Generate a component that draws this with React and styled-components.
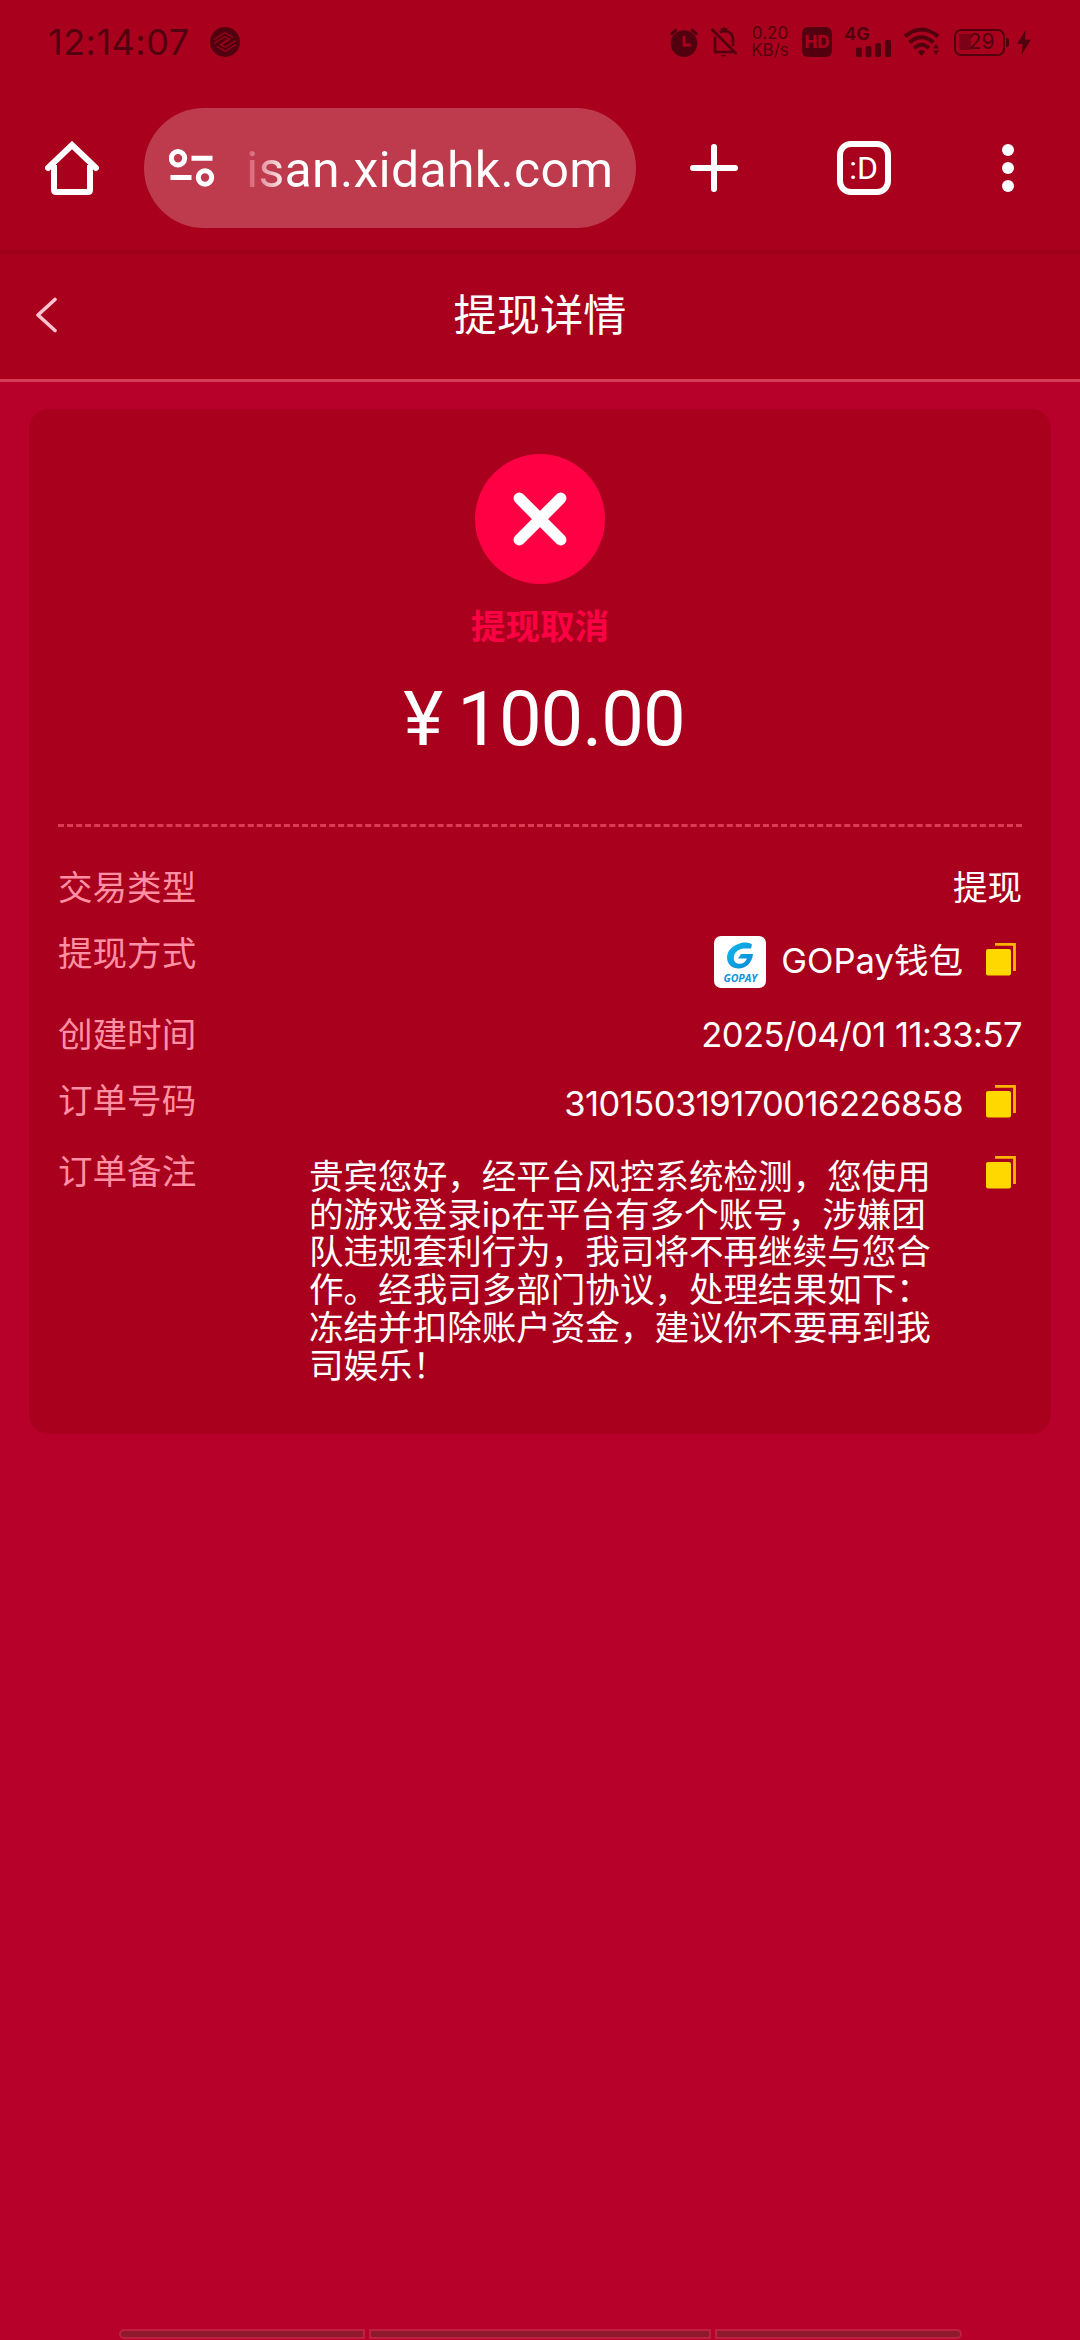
import styled, { createGlobalStyle } from "styled-components";

const INK = "#52000f";

const noteLines = [
  "贵宾您好，经平台风控系统检测，您使用",
  "的游戏登录ip在平台有多个账号，涉嫌团",
  "队违规套利行为，我司将不再继续与您合",
  "作。经我司多部门协议，处理结果如下：",
  "冻结并扣除账户资金，建议你不要再到我",
  "司娱乐！",
];

const CarrierIcon = () => (
  <svg width="30" height="30" viewBox="0 0 30 30" fill="none" stroke="#a0001b" strokeWidth="1.300">
    <circle cx="15" cy="15" r="15" fill={INK} stroke="none" />
    <path d="M4 12.500 13.500 6.500q1.500-1 3 0L23 10.500" />
    <path d="M4 16.500 13.500 10.500q1.500-1 3 0l2.500 1.500-9 6" />
    <path d="M26 17.500 16.500 23.500q-1.500 1-3 0L7 19.500" />
    <path d="M26 13.500 16.500 19.500q-1.500 1-3 0L11 18l9-6" />
  </svg>
);

const AlarmIcon = () => (
  <svg width="28" height="30" viewBox="0 0 28 30">
    <circle cx="14" cy="16.500" r="13.300" fill={INK} />
    <path d="M.800 7.500 6.500 2.500M27.200 7.500 21.500 2.500" stroke={INK} strokeWidth="3" />
    <path d="M14 9v9h6.500" fill="none" stroke="#a9001d" strokeWidth="2.800" />
  </svg>
);

const BellOffIcon = () => (
  <svg width="28" height="30" viewBox="0 0 28 30" fill="none" stroke={INK} strokeWidth="2.600">
    <path d="M1.500 2 26.500 27" />
    <path d="M5 9.500V25h18.500M10 5.500Q12 4 14.500 4q8.500.500 8.500 9v6" />
    <path d="M4 25h4M11 2.800q3-2 6 0" />
    <path d="M10.500 28h6l-3 2z" fill={INK} stroke="none" />
  </svg>
);

const SignalIcon = () => (
  <svg width="36" height="17" viewBox="0 0 36 17" fill={INK}>
    <rect x="0" y="7.500" width="5.800" height="9.500" rx="1.500" />
    <rect x="9.600" y="6" width="5.800" height="11" rx="1.500" />
    <rect x="19.200" y="3" width="5.800" height="14" rx="1.500" />
    <rect x="29" y="0" width="6" height="17" rx="1.500" />
  </svg>
);

const WifiIcon = () => (
  <svg width="36" height="30" viewBox="0 0 36 30" fill="none" stroke={INK}>
    <path d="M1 9.500q16.500-14 33 0" strokeWidth="4" />
    <path d="M5.500 15.500q12-10.500 24 0" strokeWidth="4" />
    <path d="M10 21q7.500-6.500 15 0" strokeWidth="3.800" />
    <path d="M13.500 24.500q4-3 8 0l-4 4.500z" fill={INK} stroke="none" />
    <path d="M29 21.500h6l-3-4.500zM29 23.500h6l-3 4.500z" fill={INK} stroke="none" />
  </svg>
);

const BoltIcon = () => (
  <svg width="14" height="25" viewBox="0 0 14 25">
    <path d="M8.500 0 0 14h5.500L4.500 25 14 9.500H8z" fill={INK} />
  </svg>
);

const HomeIcon = () => (
  <svg width="54" height="54" viewBox="0 0 54 54" fill="none" stroke="#fff">
    <path d="M9 24v25q0 2 2 2h32q2 0 2-2V24" strokeWidth="6" />
    <path d="M3 27 27 4l24 23" strokeWidth="6" strokeLinecap="round" />
  </svg>
);

const TuneIcon = () => (
  <svg width="46" height="38" viewBox="0 0 46 38" fill="none" stroke="#fff" strokeWidth="5">
    <circle cx="9" cy="9.300" r="6.700" />
    <path d="M22.500 9.300h21M1.500 28.500h21" />
    <circle cx="36" cy="28.500" r="6.700" />
  </svg>
);

const PlusIcon = () => (
  <svg width="48" height="48" viewBox="0 0 48 48" stroke="#fff" strokeWidth="6" strokeLinecap="round">
    <path d="M24 3v42M3 24h42" />
  </svg>
);

const MoreIcon = () => (
  <svg width="12" height="48" viewBox="0 0 12 48" fill="#fff">
    <circle cx="6" cy="6" r="6" />
    <circle cx="6" cy="24" r="6" />
    <circle cx="6" cy="42" r="6" />
  </svg>
);

const BackIcon = () => (
  <svg width="22" height="36" viewBox="0 0 22 36" fill="none" stroke="#ffc4d0" strokeWidth="3.600" strokeLinecap="round" strokeLinejoin="round">
    <path d="M19 2.500 2 18l17 15.500" />
  </svg>
);

const CancelIcon = () => (
  <svg width="130" height="130" viewBox="0 0 130 130">
    <circle cx="65" cy="65" r="65" fill="#ff0045" />
    <path d="M44.300 44.300 85.700 85.700M85.700 44.300 44.300 85.700" stroke="#fff" strokeWidth="11.500" strokeLinecap="round" />
  </svg>
);

const CopyIcon = () => (
  <svg width="30" height="33" viewBox="0 0 30 33">
    <rect x="0" y="6" width="25" height="26.500" rx="2" fill="#ffd800" />
    <path d="M9 1.300h19.500V28" fill="none" stroke="#ffb400" strokeWidth="2.800" />
  </svg>
);

const GoPayMark = () => (
  <svg width="28" height="27" viewBox="0 0 28 27" fill="none">
    <defs>
      <linearGradient id="gopay" x1="0" y1="0" x2="1" y2="1">
        <stop offset="0" stopColor="#12b9ea" />
        <stop offset="1" stopColor="#0788d8" />
      </linearGradient>
    </defs>
    <path
      d="M26 2.500C23 .500 19 0 15 1 7 3 1 8.500 1 15.500c0 6.500 5 11 11.500 11 7.500 0 13.500-5.500 14.500-14.500H15l-3 4.500h9c-1.500 3.500-4 5.300-7.500 5.300-4 0-6-2.800-5.700-6.300.400-5.500 5.200-9 10.200-9H25z"
      fill="url(#gopay)"
    />
  </svg>
);

const copyable = (content) => (
  <>
    {content}
    <CopyIcon />
  </>
);

export default function App() {
  return (
    <Screen>
      <GlobalStyle />
      <StatusBar>
        <Clock>12:14:07</Clock>
        <CarrierIcon />
        <StatusIcons>
          <AlarmIcon />
          <BellOffIcon />
          <Speed>
            <span>0.20</span>
            <span>KB/s</span>
          </Speed>
          <HdBadge>HD</HdBadge>
          <Network>
            <span>4G</span>
            <SignalIcon />
          </Network>
          <WifiIcon />
          <Battery>29</Battery>
          <BoltIcon />
        </StatusIcons>
      </StatusBar>

      <BrowserBar>
        <HomeIcon />
        <AddressPill>
          <TuneIcon />
          <Address>isan.xidahk.com</Address>
        </AddressPill>
        <BrowserActions>
          <PlusIcon />
          <TabCount>:D</TabCount>
          <MoreIcon />
        </BrowserActions>
      </BrowserBar>

      <PageHeader>
        <BackIcon />
        <PageTitle>提现详情</PageTitle>
      </PageHeader>

      <Card>
        <Summary>
          <CancelIcon />
          <Status>提现取消</Status>
          <Amount>
            <Currency>¥</Currency>100.00
          </Amount>
        </Summary>
        <Details>
          <Row $height={66}>
            <Label>交易类型</Label>
            <Value>提现</Value>
          </Row>
          <Row $height={81}>
            <Label>提现方式</Label>
            <Value $height={52} $drop={1}>
              {copyable(
                <>
                  <Logo>
                    <GoPayMark />
                    <LogoName>GOPAY</LogoName>
                  </Logo>
                  <Method>GOPay钱包</Method>
                </>
              )}
            </Value>
          </Row>
          <Row $height={66}>
            <Label>创建时间</Label>
            <Value $tracking={-0.52}>2025/04/01 11:33:57</Value>
          </Row>
          <Row $height={71}>
            <Label>订单号码</Label>
            <Value $drop={3} $tracking={-0.55}>
              {copyable(<Copied>310150319170016226858</Copied>)}
            </Value>
          </Row>
          <Row>
            <Label>订单备注</Label>
            <Note>
              {noteLines.map((line) => (
                <div key={line}>{line}</div>
              ))}
            </Note>
            <Value $drop={3}>
              <CopyIcon />
            </Value>
          </Row>
        </Details>
      </Card>

      <GestureBar>
        <Gesture $round="6px 0 0 6px" />
        <Gesture $wide />
        <Gesture $round="0 6px 6px 0" />
      </GestureBar>
    </Screen>
  );
}

const GlobalStyle = createGlobalStyle`
  * {
    box-sizing: border-box;
  }

  body {
    margin: 0;
    background: #b7002a;
  }

  svg {
    display: block;
    flex-shrink: 0;
  }
`;

const Screen = styled.div`
  display: flex;
  flex-direction: column;
  width: 1080px;
  height: 2340px;
  overflow: hidden;
  background: #b7002a;
  color: #fff;
  font-family: "Inter", "Noto Sans CJK SC", sans-serif;
`;

const StatusBar = styled.div`
  display: flex;
  align-items: center;
  height: 84px;
  padding: 0 49px 0 48px;
  background: #a9001d;
  color: ${INK};
`;

const Clock = styled.div`
  width: 162px;
  font-size: 36px;
  letter-spacing: 0.5px;
  white-space: nowrap;
`;

const StatusIcons = styled.div`
  display: flex;
  align-items: center;
  margin-left: auto;
  gap: 12px;
`;

const Speed = styled.div`
  display: flex;
  flex-direction: column;
  align-items: center;
  width: 40px;
  font-size: 17px;
  line-height: 17px;
`;

const HdBadge = styled.div`
  width: 30px;
  height: 30px;
  border-radius: 6px;
  background: ${INK};
  color: #a9001d;
  font-size: 17px;
  font-weight: 800;
  line-height: 30px;
  text-align: center;
`;

const Network = styled.div`
  display: flex;
  flex-direction: column;
  align-items: flex-end;
  width: 48px;
  height: 30px;
  font-size: 18px;
  font-weight: 700;
  line-height: 14px;

  span {
    align-self: flex-start;
    height: 13px;
  }
`;

const Battery = styled.div`
  position: relative;
  width: 51px;
  height: 27px;
  margin-left: 2px;
  border: 2.500px solid ${INK};
  border-radius: 7px;
  background: linear-gradient(90deg, #7c0016 12px, transparent 12px) 3px 3px / 40px 16px no-repeat;
  font-size: 21px;
  line-height: 22px;
  text-align: center;
  padding-left: 4px;

  &::after {
    content: "";
    position: absolute;
    top: 7px;
    right: -6px;
    width: 3px;
    height: 9px;
    border-radius: 0 2px 2px 0;
    background: ${INK};
  }
`;

const BrowserBar = styled.div`
  display: flex;
  align-items: center;
  height: 170px;
  padding: 0 66px 2px 45px;
  background: linear-gradient(#a9001d 163px, #9b0019);
`;

const AddressPill = styled.div`
  display: flex;
  align-items: center;
  width: 492px;
  height: 120px;
  margin-left: 45px;
  padding-left: 25px;
  border-radius: 60px;
  background: #be3b4e;
`;

const Address = styled.div`
  margin-left: 31px;
  padding-top: 4px;
  font-family: Roboto, sans-serif;
  font-size: 50px;
  letter-spacing: 0.3px;
  white-space: nowrap;
  background: linear-gradient(90deg, #d2586c, #fff 42px);
  background-clip: text;
  color: transparent;
`;

const BrowserActions = styled.div`
  display: flex;
  flex: 1;
  align-items: center;
  justify-content: space-between;
  margin-left: 54px;
`;

const TabCount = styled.div`
  display: flex;
  align-items: center;
  justify-content: center;
  width: 54px;
  height: 54px;
  margin-left: -13px;
  padding-bottom: 1px;
  border: 6px solid #fff;
  border-radius: 14px;
  font-family: Roboto, sans-serif;
  font-size: 32px;
  line-height: 40px;
`;

const PageHeader = styled.div`
  display: flex;
  align-items: center;
  height: 128px;
  padding: 0 58px 3px 36px;
  border-bottom: 3px solid #d43c57;
  background: #a9001d;
`;

const PageTitle = styled.h1`
  flex: 1;
  margin: 0;
  font-size: 43.200px;
  font-weight: 400;
  line-height: 60px;
  text-align: center;
`;

const Card = styled.div`
  height: 1025px;
  margin: 27px 29px 0 29px;
  padding: 45px 29px 0;
  border-radius: 20px;
  background: #a9001d;
`;

const Summary = styled.div`
  display: flex;
  flex-direction: column;
  align-items: center;
  height: 373px;
  border-bottom: 3px dashed #df3a55;
`;

const Status = styled.div`
  margin-top: 23px;
  color: #ff0045;
  font-size: 34.500px;
  font-weight: 700;
  line-height: 40px;
`;

const Amount = styled.div`
  display: flex;
  margin-top: 32px;
  padding-left: 8px;
  font-family: Roboto, sans-serif;
  font-size: 76px;
  line-height: 80px;
  letter-spacing: -1px;
`;

const Currency = styled.span`
  width: 54px;
`;

const Details = styled.div`
  display: flex;
  flex-direction: column;
  padding-top: 42px;
`;

const Row = styled.div`
  display: flex;
  height: ${({ $height }) => ($height ? `${$height}px` : "auto")};
  font-size: 34.560px;
  line-height: 38px;
`;

const Label = styled.div`
  width: 251px;
  color: #ff8fa3;
`;

const Value = styled.div`
  display: flex;
  align-items: center;
  height: ${({ $height }) => $height || 38}px;
  margin-top: ${({ $drop }) => $drop || 0}px;
  margin-left: auto;
  letter-spacing: ${({ $tracking }) => $tracking || 0}px;
  white-space: nowrap;

  > svg {
    margin-right: 6px;
    margin-bottom: 6px;
  }
`;

const Logo = styled.div`
  display: flex;
  flex-direction: column;
  align-items: center;
  width: 52px;
  height: 52px;
  margin-right: 15px;
  padding-top: 6px;
  border-radius: 7px;
  background: #fff;
`;

const LogoName = styled.span`
  margin-top: 3px;
  color: #0a93dc;
  font-family: "Open Sans", sans-serif;
  font-size: 10.500px;
  font-style: italic;
  font-weight: 700;
  line-height: 12px;
`;

const Copied = styled.span`
  margin-right: 23px;
`;

const Method = styled(Copied)`
  padding-bottom: 2px;
`;

const Note = styled.div`
  width: 640px;
  padding-top: 5px;
  line-height: 37.700px;
  white-space: nowrap;
`;

const GestureBar = styled.div`
  display: flex;
  gap: 4px;
  width: 843px;
  margin: auto auto 1px;
`;

const Gesture = styled.div`
  flex: ${({ $wide }) => ($wide ? "0 0 342px" : "1")};
  height: 10px;
  border: 2px solid #be2140;
  border-radius: ${({ $round }) => $round || "0"};
  background: #8f1a2c;
`;
